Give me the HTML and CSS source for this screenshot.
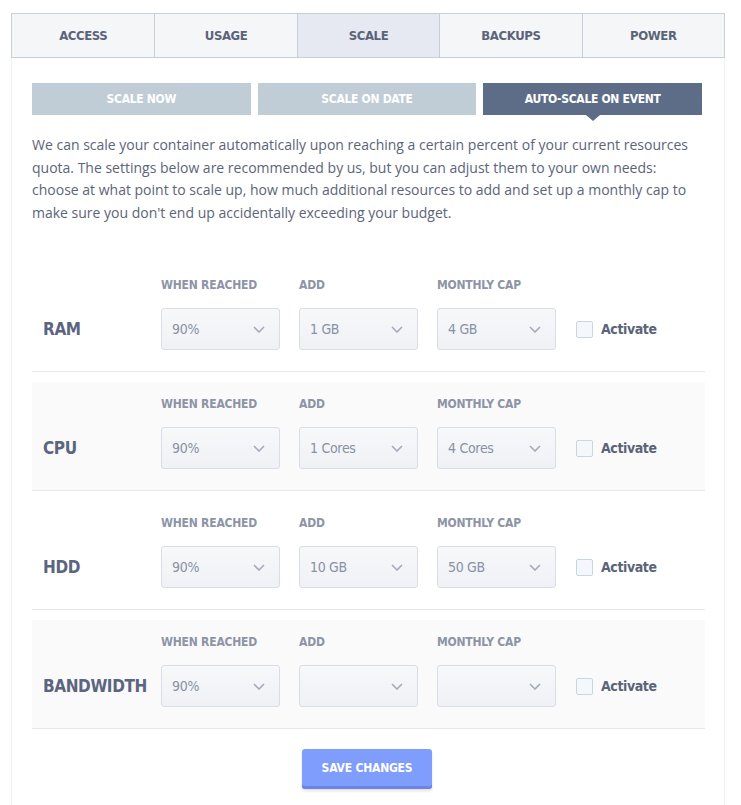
FILE: index.html
```html
<!DOCTYPE html>
<html>
<head>
<meta charset="utf-8">
<link rel="stylesheet" href="styles.css">
</head>
<body>
<div class="panel">
  <div class="tabs">
    <div class="tab">ACCESS</div>
    <div class="tab">USAGE</div>
    <div class="tab active">SCALE</div>
    <div class="tab">BACKUPS</div>
    <div class="tab">POWER</div>
  </div>
  <div class="content">
    <div class="subtabs">
      <div class="subtab">SCALE NOW</div>
      <div class="subtab">SCALE ON DATE</div>
      <div class="subtab active">AUTO-SCALE ON EVENT</div>
    </div>
    <p class="intro">We can scale your container automatically upon reaching a certain percent of your current resources quota. The settings below are recommended by us, but you can adjust them to your own needs: choose at what point to scale up, how much additional resources to add and set up a monthly cap to make sure you don't end up accidentally exceeding your budget.</p>

    <div class="rows">
      <div class="row">
        <div class="name">RAM</div>
        <div class="field"><div class="flabel">WHEN REACHED</div><div class="select"><span>90%</span><svg class="chev" viewBox="0 0 12 7"><path d="M1 1l5 5 5-5"/></svg></div></div>
        <div class="field"><div class="flabel">ADD</div><div class="select"><span>1 GB</span><svg class="chev" viewBox="0 0 12 7"><path d="M1 1l5 5 5-5"/></svg></div></div>
        <div class="field"><div class="flabel">MONTHLY CAP</div><div class="select"><span>4 GB</span><svg class="chev" viewBox="0 0 12 7"><path d="M1 1l5 5 5-5"/></svg></div></div>
        <label class="check"><span class="box"></span>Activate</label>
      </div>
      <div class="row alt">
        <div class="name">CPU</div>
        <div class="field"><div class="flabel">WHEN REACHED</div><div class="select"><span>90%</span><svg class="chev" viewBox="0 0 12 7"><path d="M1 1l5 5 5-5"/></svg></div></div>
        <div class="field"><div class="flabel">ADD</div><div class="select"><span>1 Cores</span><svg class="chev" viewBox="0 0 12 7"><path d="M1 1l5 5 5-5"/></svg></div></div>
        <div class="field"><div class="flabel">MONTHLY CAP</div><div class="select"><span>4 Cores</span><svg class="chev" viewBox="0 0 12 7"><path d="M1 1l5 5 5-5"/></svg></div></div>
        <label class="check"><span class="box"></span>Activate</label>
      </div>
      <div class="row">
        <div class="name">HDD</div>
        <div class="field"><div class="flabel">WHEN REACHED</div><div class="select"><span>90%</span><svg class="chev" viewBox="0 0 12 7"><path d="M1 1l5 5 5-5"/></svg></div></div>
        <div class="field"><div class="flabel">ADD</div><div class="select"><span>10 GB</span><svg class="chev" viewBox="0 0 12 7"><path d="M1 1l5 5 5-5"/></svg></div></div>
        <div class="field"><div class="flabel">MONTHLY CAP</div><div class="select"><span>50 GB</span><svg class="chev" viewBox="0 0 12 7"><path d="M1 1l5 5 5-5"/></svg></div></div>
        <label class="check"><span class="box"></span>Activate</label>
      </div>
      <div class="row alt">
        <div class="name">BANDWIDTH</div>
        <div class="field"><div class="flabel">WHEN REACHED</div><div class="select"><span>90%</span><svg class="chev" viewBox="0 0 12 7"><path d="M1 1l5 5 5-5"/></svg></div></div>
        <div class="field"><div class="flabel">ADD</div><div class="select"><span></span><svg class="chev" viewBox="0 0 12 7"><path d="M1 1l5 5 5-5"/></svg></div></div>
        <div class="field"><div class="flabel">MONTHLY CAP</div><div class="select"><span></span><svg class="chev" viewBox="0 0 12 7"><path d="M1 1l5 5 5-5"/></svg></div></div>
        <label class="check"><span class="box"></span>Activate</label>
      </div>
    </div>

    <div class="actions">
      <button class="save">SAVE CHANGES</button>
    </div>
  </div>
</div>
</body>
</html>
```
FILE: styles.css
```css
* { box-sizing: border-box; }
html, body { margin: 0; padding: 0; background: #fff; }
body { font-family: "Open Sans", sans-serif; }

.panel {
  width: 714px;
  margin: 13px 0 0 11px;
  min-height: 792px;
  display: flex;
  flex-direction: column;
}

.tabs {
  display: grid;
  grid-template-columns: repeat(5, 1fr);
  border: 1px solid #c6ced9;
  height: 45px;
}
.tab {
  display: flex;
  align-items: center;
  justify-content: center;
  background: #f5f6f8;
  color: #5a6479;
  font-family: "DejaVu Sans Condensed", sans-serif;
  font-weight: bold;
  font-size: 13px;
  letter-spacing: -0.4px;
  border-left: 1px solid #c6ced9;
}
.tab:first-child { border-left: none; }
.tab.active { background: #e6e9f2; }

.content {
  flex: 1;
  border-left: 1px solid #eef0f3;
  border-right: 1px solid #eef0f3;
  padding: 25px 19px 0 20px;
}

.subtabs {
  display: grid;
  grid-template-columns: repeat(3, 1fr);
  column-gap: 7px;
  margin-right: 3px;
}
.subtab {
  position: relative;
  height: 32px;
  display: flex;
  align-items: center;
  justify-content: center;
  background: #c0ccd6;
  color: #fff;
  font-family: "DejaVu Sans Condensed", sans-serif;
  font-weight: bold;
  font-size: 12px;
  letter-spacing: -0.3px;
}
.subtab.active { background: #5e6d87; }
.subtab.active::after {
  content: "";
  position: absolute;
  left: 50%;
  top: 32px;
  margin-left: -7px;
  border-left: 7px solid transparent;
  border-right: 7px solid transparent;
  border-top: 6px solid #5e6d87;
}

.intro {
  margin: 19px 0 0;
  font-size: 14px;
  line-height: 22.5px;
  color: #5b6479;
}

.rows { margin-top: 39px; }
.row {
  display: grid;
  grid-template-columns: 99px 119px 119px 119px auto;
  column-gap: 19px;
  align-items: end;
  padding: 15px 0 21px 11px;
  border-bottom: 1px solid #e6e8ec;
  margin-bottom: 10px;
}
.row.alt { background: #fafafb; }

.name {
  height: 42px;
  display: flex;
  align-items: center;
  font-family: "DejaVu Sans Condensed", sans-serif;
  font-weight: bold;
  font-size: 17px;
  letter-spacing: -0.4px;
  color: #5b6580;
  white-space: nowrap;
}

.flabel {
  height: 14px;
  line-height: 14px;
  margin-bottom: 16px;
  font-family: "DejaVu Sans Condensed", sans-serif;
  font-weight: bold;
  font-size: 12px;
  letter-spacing: -0.2px;
  color: #8c94a6;
  white-space: nowrap;
}
.select {
  height: 42px;
  border: 1px solid #d9dde5;
  border-radius: 3px;
  background: linear-gradient(to bottom, #f7f8fa, #eff1f5);
  display: flex;
  align-items: center;
  justify-content: space-between;
  padding: 0 14px 0 10px;
  font-family: "DejaVu Sans Condensed", sans-serif;
  font-size: 14px;
  letter-spacing: -0.3px;
  color: #8991a4;
}
.chev {
  width: 12px;
  height: 7px;
  fill: none;
  stroke: #a3abb9;
  stroke-width: 1.6;
}

.check {
  height: 42px;
  display: flex;
  align-items: center;
  margin-left: 1px;
  font-family: "DejaVu Sans Condensed", sans-serif;
  font-weight: bold;
  font-size: 14px;
  letter-spacing: -0.4px;
  color: #5a6479;
}
.box {
  width: 17px;
  height: 17px;
  border: 1px solid #c9d6e0;
  background: #f4f8fc;
  border-radius: 2px;
  margin-right: 8px;
}

.actions {
  display: flex;
  justify-content: center;
  margin-top: 20px;
  margin-right: 3px;
}
.save {
  width: 130px;
  height: 40px;
  border: none;
  border-radius: 3px;
  background: #7f9dfc;
  box-shadow: inset 0 -3px 0 #6b84e6, 0 2px 3px rgba(0,0,0,0.12);
  color: #fff;
  font-family: "DejaVu Sans Condensed", sans-serif;
  font-weight: bold;
  font-size: 12px;
  letter-spacing: -0.2px;
  padding: 0 0 3px;
}
```
